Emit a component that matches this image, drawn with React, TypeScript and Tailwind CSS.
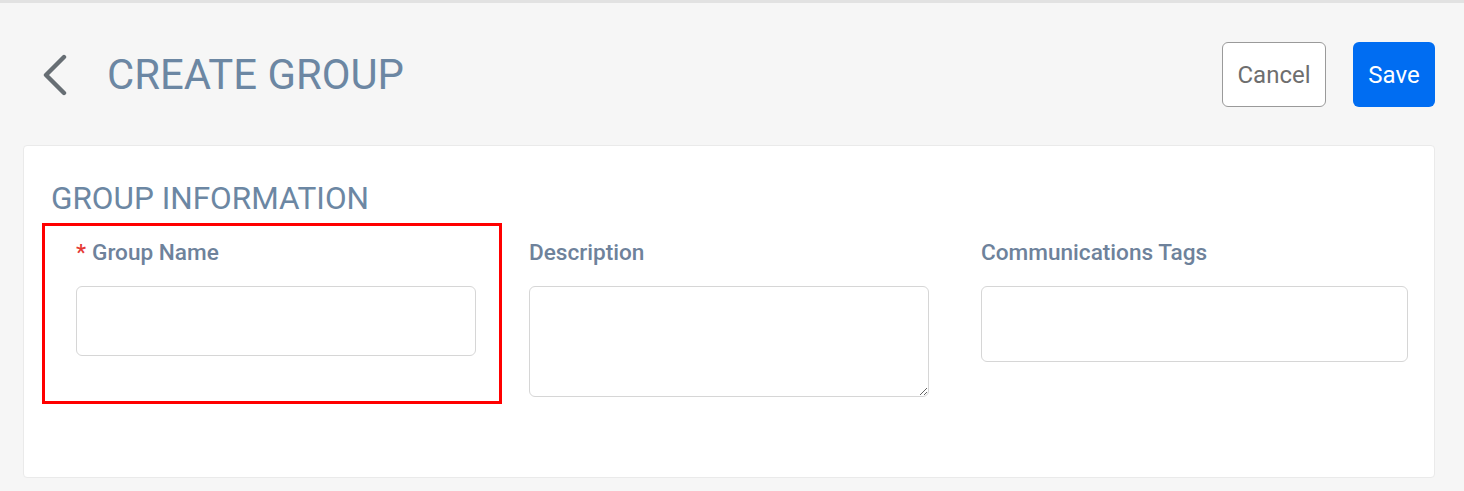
import { useState } from 'react';

export default function App() {
  const [name, setName] = useState('');
  const [desc, setDesc] = useState('');
  const [tags, setTags] = useState('');

  return (
    <div className="min-h-[491px] w-full bg-[#f6f6f6] border-t-[3px] border-[#e2e2e2] font-['Roboto',sans-serif]">
      {/* HEADER */}
      <div className="flex items-center justify-between h-[142px] pl-[42px] pr-[29px] pt-[1px]">
        <div className="flex items-center gap-[39px]">
          <button className="w-[26px] h-[42px] flex items-center justify-center">
            <svg width="26" height="42" viewBox="0 0 26 42" fill="none">
              <path d="M22 3 L4 21 L22 39" stroke="#676e74" strokeWidth="4.4" strokeLinecap="round" strokeLinejoin="round" />
            </svg>
          </button>
          <h1 className="text-[41.8px] leading-none text-[#6c87a3]">CREATE GROUP</h1>
        </div>
        <div className="flex items-center gap-[27px]">
          <button className="h-[65px] w-[104px] rounded-[6px] border border-[#9a9a9a] bg-white text-[24px] text-[#6e6e6e]">Cancel</button>
          <button className="h-[65px] w-[82px] rounded-[6px] bg-[#006df2] text-[24px] text-white">Save</button>
        </div>
      </div>

      {/* CARD */}
      <div className="ml-[23px] mr-[29px] h-[333px] bg-white border border-[#eaeaea] rounded-[4px] pl-[18px] pr-[26px] pt-[37px]">
        <h2 className="pl-[9px] text-[31.5px] leading-none text-[#6c87a3] h-[40px]">GROUP INFORMATION</h2>
        <div className="flex items-start">
          <div className="w-[460px] h-[181px] border-[3px] border-[#ff0000] pl-[31px] pt-[12px]">
            <label className="block text-[22.6px] font-medium text-[#6e829b] leading-[30px] h-[48px]">
              <span className="text-[#e53935] mr-[6px]">*</span>Group Name
            </label>
            <input
              value={name}
              onChange={e => setName(e.target.value)}
              className="w-[400px] h-[70px] border border-[#d6d6d6] rounded-[6px] outline-none px-3"
            />
          </div>
          <div className="ml-[27px] w-[400px] pt-[15px]">
            <label className="block text-[22.6px] font-medium text-[#6e829b] leading-[30px] h-[48px]">Description</label>
            <textarea
              value={desc}
              onChange={e => setDesc(e.target.value)}
              className="block w-[400px] h-[111px] border border-[#d6d6d6] rounded-[6px] outline-none px-3"
            />
          </div>
          <div className="ml-[52px] w-[427px] pt-[15px]">
            <label className="block text-[22.6px] font-medium text-[#6e829b] leading-[30px] h-[48px]">Communications Tags</label>
            <input
              value={tags}
              onChange={e => setTags(e.target.value)}
              className="w-[427px] h-[76px] border border-[#d6d6d6] rounded-[6px] outline-none px-3"
            />
          </div>
        </div>
      </div>
    </div>
  );
}
